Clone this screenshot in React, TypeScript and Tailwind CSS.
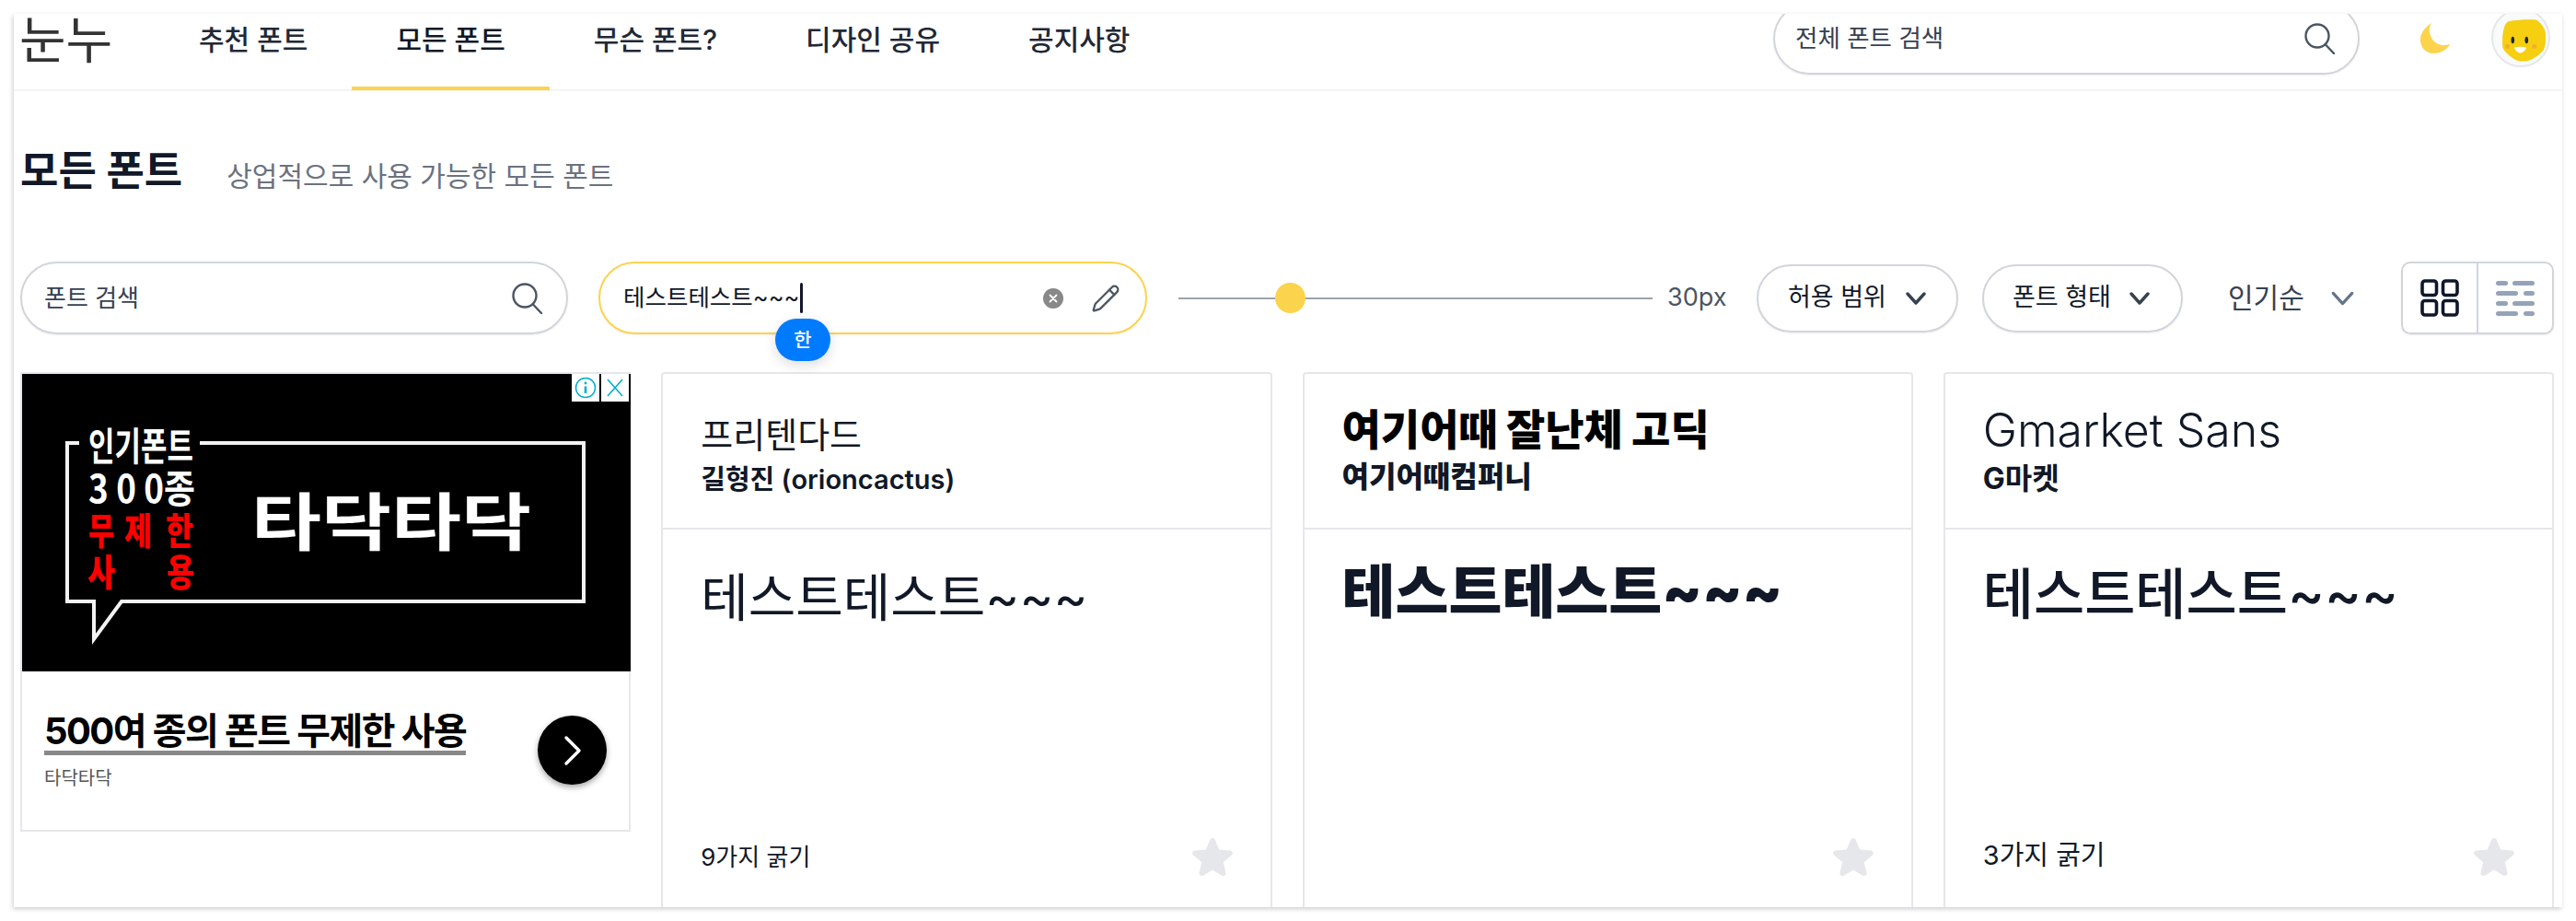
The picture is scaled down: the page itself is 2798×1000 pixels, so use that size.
import { Pencil } from "lucide-react";

const SearchIcon = () => (
  <svg width="34" height="34" viewBox="0 0 34 34" fill="none" stroke="#4b5563" strokeWidth="2.4" strokeLinecap="round">
    <circle cx="14" cy="14" r="12.5" />
    <line x1="23" y1="23.5" x2="32" y2="33" />
  </svg>
);

const Chevron = ({ color = "#374151", w = 3.4, big = false }: { color?: string; w?: number; big?: boolean }) => (
  <svg width={big ? 25 : 22} height={big ? 16 : 14} viewBox="0 0 22 14" fill="none" stroke={color} strokeWidth={w} strokeLinecap="round" strokeLinejoin="round">
    <path d="M2 2 L11 12 L20 2" />
  </svg>
);

const Star = () => (
  <svg width="44" height="42" viewBox="2 2.4 20 19.4" preserveAspectRatio="none" fill="#e5e7eb">
    <path d="M10.788 3.21c.448-1.077 1.976-1.077 2.424 0l2.082 5.006 5.404.434c1.164.093 1.636 1.545.749 2.305l-4.117 3.527 1.257 5.273c.271 1.136-.964 2.033-1.96 1.425L12 18.354 7.373 21.18c-.996.608-2.231-.29-1.96-1.425l1.257-5.273-4.117-3.527c-.887-.76-.415-2.212.749-2.305l5.404-.434 2.082-5.006Z" />
  </svg>
);

const Avatar = () => (
  <svg width="47" height="46" viewBox="0 0 47 46">
    <path d="M7 2 C16 0.5 28 0 37 0.5 C42 4 46 9 47 15 C47.5 22 47 28 45 33 C40 39 33 44 26 45.5 C20 46 15 45 11 42 C6 38 2 35 0.5 31 C-0.5 23 0 13 3 6 C4 4 5 3 7 2 Z" fill="#f5cf10" />
    <ellipse cx="11.3" cy="22.5" rx="1.8" ry="3.8" fill="#1f2937" />
    <ellipse cx="26.3" cy="22.5" rx="1.8" ry="3.8" fill="#1f2937" />
    <circle cx="5.6" cy="29.5" r="2.4" fill="#f59e42" opacity="0.75" />
    <circle cx="34.7" cy="29.5" r="2.4" fill="#f59e42" opacity="0.75" />
    <path d="M13 30.5 C17 29.5 22 29.5 26 30.5 C25 34 22 36.5 19.5 36.5 C17 36.5 14 34 13 30.5 Z" fill="#ffffff" />
  </svg>
);

const AdImage = () => (
  <svg width="661" height="323" viewBox="0 0 661 323" className="block" fontFamily="'Noto Sans CJK KR', sans-serif">
    <rect width="661" height="323" fill="#000" />
    <path d="M62 75 H49 V247 H78 V288 L108 247 H610 V75 H193" fill="none" stroke="#f3f3f3" strokeWidth="4" />
    <g fontWeight="700" fill="#fff" fontSize="42">
      <text x="72" y="94" textLength="114" lengthAdjust="spacingAndGlyphs">인기폰트</text>
      <text x="72" y="140" textLength="116" lengthAdjust="spacingAndGlyphs">3 0 0종</text>
    </g>
    <g fontWeight="900" fill="#ff0000" fontSize="40">
      <text x="72" y="185" textLength="28" lengthAdjust="spacingAndGlyphs">무</text>
      <text x="111" y="185" textLength="30" lengthAdjust="spacingAndGlyphs">제</text>
      <text x="156" y="185" textLength="30" lengthAdjust="spacingAndGlyphs">한</text>
      <text x="71" y="230" textLength="30" lengthAdjust="spacingAndGlyphs">사</text>
      <text x="157" y="230" textLength="30" lengthAdjust="spacingAndGlyphs">용</text>
    </g>
    <text x="249" y="186" fill="#fff" fontWeight="700" fontSize="68" textLength="304" lengthAdjust="spacingAndGlyphs">타닥타닥</text>
  </svg>
);

const Card = ({
  title,
  author,
  foot,
  titleCls,
  authorCls,
  previewCls,
  footCls,
}: {
  title: string;
  author: string;
  foot?: string;
  titleCls: string;
  authorCls: string;
  previewCls: string;
  footCls: string;
}) => (
  <div className="flex h-[600px] flex-col rounded-[4px] border-2 border-[#e5e7eb] text-[#111827]">
    <div className="h-[169px] border-b-2 border-[#e5e7eb] px-[41px]">
      <div className={titleCls}>{title}</div>
      <div className={authorCls}>{author}</div>
    </div>
    <div className="flex flex-1 flex-col justify-between px-[41px]">
      <div className={previewCls}>테스트테스트~~~</div>
      <div className="mb-[48px] flex h-[46px] items-center justify-between">
        <span className={footCls}>{foot}</span>
        <Star />
      </div>
    </div>
  </div>
);

export default function App() {
  return (
    <div className="h-[1000px] w-[2798px] overflow-hidden bg-white pl-[15px] pt-[15px] font-['Inter','Noto_Sans_CJK_KR',sans-serif]">
      <div className="h-[970px] w-[2768px] overflow-hidden bg-white shadow-[-1px_2px_5px_rgba(0,0,0,0.2)]">
        <header className="flex h-[84px] items-start border-b-2 border-[#f3f4f6]">
          <div className="ml-[6px] -mt-[4px] w-[147px] text-[55px] leading-[64px] text-[#333333]">눈누</div>
          {[
            ["추천 폰트", false],
            ["모든 폰트", true],
            ["무슨 폰트?", false],
            ["디자인 공유", false],
            ["공지사항", false],
          ].map(([label, active]) => (
            <a
              key={label as string}
              className={
                active
                  ? "h-[83px] border-b-4 border-[#fcd34d] px-[48px] pt-[9px] text-[30px] font-medium leading-[38px] text-[#111827]"
                  : "h-[83px] px-[48px] pt-[9px] text-[30px] font-medium leading-[38px] text-[#1f2937]"
              }
            >
              {label}
            </a>
          ))}
          <div className="ml-auto -mt-[12px] flex h-[78px] w-[637px] items-center justify-between rounded-full border-2 border-[#d1d5db] pl-[22px] pr-[24px] shadow-[0_1px_2px_rgba(0,0,0,0.08)]">
            <span className="text-[26.5px] text-[#374151]">전체 폰트 검색</span>
            <SearchIcon />
          </div>
          <div className="ml-[65px] mt-[10px]">
            <svg width="34" height="34" viewBox="0 0 34 34" fill="#fcd34d">
              <path d="M13 0 C4 6 0 13 1 20 C2 28 8 33 15 33 C23 33 30 29 33 23 C24 26 17 23 13 16 C10 10 10 5 13 0 Z" />
            </svg>
          </div>
          <div className="ml-[44px] mr-[13px] -mt-[6px] flex h-[64px] w-[64px] items-center justify-center rounded-full border-2 border-[#e5e7eb] bg-[#f9fafb]">
            <span className="ml-[6px] mt-[6px]">
              <Avatar />
            </span>
          </div>
        </header>

        <main className="w-[2759px] pl-[7px]">
          <div className="flex items-start pt-[62px]">
            <h1 className="text-[45px] font-bold leading-[50px] text-[#111827]">모든 폰트</h1>
            <p className="ml-[48px] mt-[8px] text-[30px] leading-[44px] text-[#6b7280]">상업적으로 사용 가능한 모든 폰트</p>
          </div>

          <div className="mt-[71px] flex h-[79px] items-center">
            <div className="flex h-[79px] w-[595px] items-center justify-between rounded-full border-2 border-[#d1d5db] pl-[24px] pr-[25px] shadow-[0_1px_2px_rgba(0,0,0,0.08)]">
              <span className="text-[26px] text-[#374151]">폰트 검색</span>
              <SearchIcon />
            </div>
            <div className="relative ml-[33px] flex h-[79px] w-[596px] items-center rounded-full border-2 border-[#fcd34d] pl-[25px] pr-[27px] shadow-[0_1px_3px_rgba(0,0,0,0.06)]">
              <span className="text-[25.5px] text-[#111827]">테스트테스트~~~</span>
              <span className="ml-[1px] h-[33px] w-[3px] rounded-full bg-[#111827]" />
              <span className="ml-auto flex h-[22px] w-[22px] items-center justify-center rounded-full bg-[#888888] text-white">
                <svg width="10" height="10" viewBox="0 0 10 10" stroke="#fff" strokeWidth="1.8" strokeLinecap="round">
                  <path d="M1.5 1.5 L8.5 8.5 M8.5 1.5 L1.5 8.5" />
                </svg>
              </span>
              <span className="ml-[30px]">
                <Pencil size={32} color="#4b5563" strokeWidth={1.7} />
              </span>
              <span className="absolute left-[190px] top-[60px] flex h-[46px] w-[60px] items-center justify-center rounded-full bg-[#007bff] text-[21px] font-medium text-white shadow-[0_4px_14px_rgba(0,0,0,0.14)]">
                한
              </span>
            </div>
            <div className="relative ml-[34px] h-[2px] w-[515px] bg-[#9ca3af]">
              <span className="absolute left-[105px] -top-[16px] h-[33px] w-[33px] rounded-full bg-[#fcd34d]" />
            </div>
            <span className="ml-[16px] w-[97px] text-[27px] text-[#4b5563]">30px</span>
            <div className="flex h-[74px] w-[219px] items-center justify-between rounded-full border-2 border-[#d1d5db] pl-[32px] pr-[33px] shadow-[0_1px_2px_rgba(0,0,0,0.08)]">
              <span className="text-[27px] text-[#111827]">허용 범위</span>
              <Chevron />
            </div>
            <div className="ml-[26px] flex h-[74px] w-[218px] items-center justify-between rounded-full border-2 border-[#d1d5db] pl-[31px] pr-[34px] shadow-[0_1px_2px_rgba(0,0,0,0.08)]">
              <span className="text-[27px] text-[#111827]">폰트 형태</span>
              <Chevron />
            </div>
            <span className="ml-[49px] text-[30px] text-[#374151]">인기순</span>
            <span className="ml-[29px]">
              <Chevron color="#64748b" w={2.8} big />
            </span>
            <div className="ml-auto flex h-[79px] w-[166px] rounded-[10px] border-2 border-[#d1d5db] shadow-[0_1px_2px_rgba(0,0,0,0.08)]">
              <div className="flex w-[82px] items-center justify-center border-r-2 border-[#d1d5db]">
                <svg width="42" height="41" viewBox="0 0 42 41" fill="none" stroke="#0f172a" strokeWidth="3.6">
                  <rect x="2" y="2" width="15.5" height="15.5" rx="3" />
                  <rect x="24.5" y="2" width="15.5" height="15.5" rx="3" />
                  <rect x="2" y="23.5" width="15.5" height="15.5" rx="3" />
                  <rect x="24.5" y="23.5" width="15.5" height="15.5" rx="3" />
                </svg>
              </div>
              <div className="flex flex-1 items-center justify-center">
                <svg width="42" height="40" viewBox="0 0 42 40" fill="#94a3b8">
                  <rect x="0" y="1" width="13" height="5" rx="2.5" />
                  <rect x="18" y="1" width="24" height="5" rx="2.5" />
                  <rect x="0" y="12" width="24" height="5" rx="2.5" />
                  <rect x="30" y="12" width="12" height="5" rx="2.5" />
                  <rect x="0" y="23" width="13" height="5" rx="2.5" />
                  <rect x="18" y="23" width="24" height="5" rx="2.5" />
                  <rect x="0" y="34" width="24" height="5" rx="2.5" />
                  <rect x="30" y="34" width="12" height="5" rx="2.5" />
                </svg>
              </div>
            </div>
          </div>

          <div className="mt-[41px] grid w-[2752px] grid-cols-4 items-start gap-[33px]">
            <div className="relative h-[499px] border-2 border-[#e5e7eb] bg-white">
              <AdImage />
              <div className="absolute right-0 top-0 flex gap-[2px]">
                <span className="flex h-[30px] w-[30px] items-center justify-center bg-white">
                  <svg width="24" height="24" viewBox="0 0 24 24" fill="none" stroke="#00aecd" strokeWidth="1.5">
                    <circle cx="12" cy="12" r="10.5" />
                    <circle cx="12" cy="7" r="1.4" fill="#00aecd" stroke="none" />
                    <path d="M12 10.5 V18" strokeWidth="2.6" />
                  </svg>
                </span>
                <span className="flex h-[30px] w-[30px] items-center justify-center bg-white">
                  <svg width="20" height="20" viewBox="0 0 20 20" stroke="#00aecd" strokeWidth="1.6">
                    <path d="M2 1 L18 19 M18 1 L2 19" />
                  </svg>
                </span>
              </div>
              <div className="flex h-[172px] items-start justify-between pl-[24px] pr-[24px]">
                <div className="pt-[44px]">
                  <div className="inline-block border-b-[5px] border-[#888888] text-[40px] font-bold leading-[42px] tracking-[-1.6px] text-black">
                    500여 종의 폰트 무제한 사용
                  </div>
                  <div className="mt-[11px] text-[20px] leading-[28px] text-[#555555]">타닥타닥</div>
                </div>
                <div className="mt-[48px] flex h-[75px] w-[75px] items-center justify-center rounded-full bg-black shadow-[0_3px_6px_rgba(0,0,0,0.35)]">
                  <svg width="20" height="34" viewBox="0 0 20 34" fill="none" stroke="#fff" strokeWidth="3.4" strokeLinecap="round" strokeLinejoin="round">
                    <path d="M3 3 L17 17 L3 31" />
                  </svg>
                </div>
              </div>
            </div>

            <Card
              title="프리텐다드"
              author="길형진 (orioncactus)"
              foot="9가지 굵기"
              titleCls="pt-[42px] text-[38px] leading-[48px]"
              authorCls="mt-[6px] text-[29px] font-semibold leading-[38px]"
              previewCls="pt-[36px] text-[56px] leading-[76px]"
              footCls="text-[26px] leading-[40px]"
            />
            <Card
              title="여기어때 잘난체 고딕"
              author="여기어때컴퍼니"
              titleCls="pt-[34px] text-[46px] font-black leading-[52px] text-black"
              authorCls="mt-[4px] text-[32px] font-black leading-[44px]"
              previewCls="pt-[27px] text-[63px] font-black leading-[80px]"
              footCls="text-[26px] leading-[40px]"
            />
            <Card
              title="Gmarket Sans"
              author="G마켓"
              foot="3가지 굵기"
              titleCls="pt-[33px] text-[50px] font-light leading-[56px]"
              authorCls="mt-[5px] text-[32px] font-bold leading-[40px]"
              previewCls="pt-[32px] text-[60px] font-medium leading-[76px]"
              footCls="-mt-[4px] text-[29px] leading-[40px]"
            />
          </div>
        </main>
      </div>
    </div>
  );
}
